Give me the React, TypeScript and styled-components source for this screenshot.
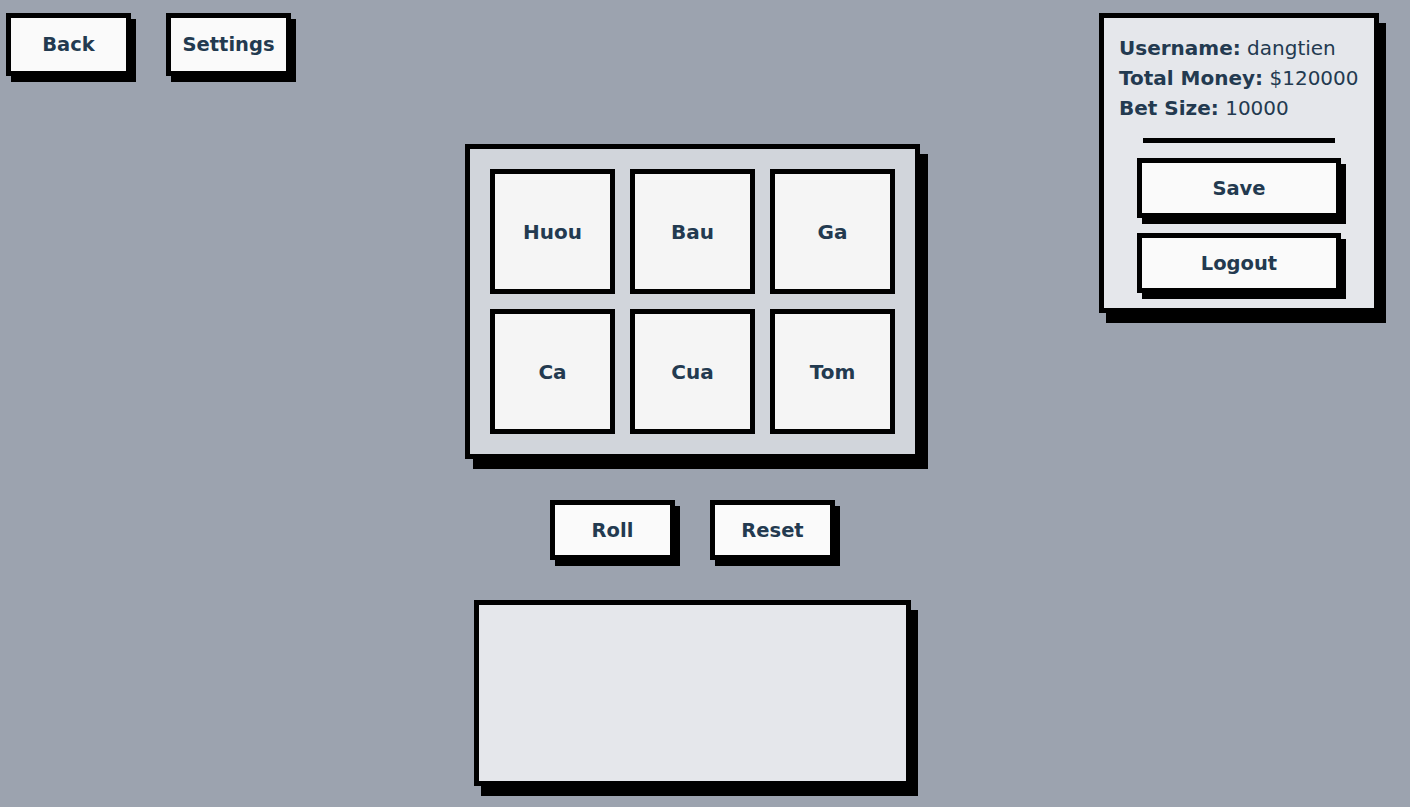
import React from "react";
import styled, { createGlobalStyle } from "styled-components";

const Global = createGlobalStyle`
  html, body { margin: 0; padding: 0; background: #9ca3af; }
  body { font-family: "DejaVu Sans", Verdana, sans-serif; color: #233a50; }
  * { box-sizing: border-box; }
`;

const Page = styled.div`
  display: grid;
  grid-template-columns: 1fr;
  width: 1410px;
  min-height: 807px;
`;

const Main = styled.div`
  grid-area: 1 / 1;
  display: flex;
  flex-direction: column;
  align-items: center;
  padding: 13px 25px 0 0;
`;

const Nav = styled.nav`
  align-self: flex-start;
  margin-left: 6px;
  display: flex;
  gap: 35px;
`;

const Btn = styled.button<{ $h?: number; $w?: number }>`
  width: ${(p) => p.$w ?? 125}px;
  height: ${(p) => p.$h ?? 60}px;
  background: #fafafa;
  border: 5px solid #000;
  box-shadow: 5px 6px 0 #000;
  font-family: "DejaVu Sans", Verdana, sans-serif;
  font-weight: bold;
  font-size: 19.5px;
  color: #233a50;
  padding: 0;
  cursor: pointer;
`;

const Board = styled.div`
  margin-top: 68px;
  display: grid;
  grid-template-columns: repeat(3, 125px);
  grid-auto-rows: 125px;
  gap: 15px;
  padding: 20px;
  background: #d1d5db;
  border: 5px solid #000;
  box-shadow: 8px 10px 0 #000;
`;

const Cell = styled.div`
  display: flex;
  align-items: center;
  justify-content: center;
  background: #f5f5f5;
  border: 5px solid #000;
  font-weight: bold;
  font-size: 20px;
  color: #233a50;
`;

const Controls = styled.div`
  margin-top: 41px;
  display: flex;
  gap: 35px;
`;

const Result = styled.div`
  margin-top: 40px;
  width: 437px;
  height: 186px;
  background: #e5e7eb;
  border: 5px solid #000;
  box-shadow: 7px 10px 0 #000;
`;

const Panel = styled.aside`
  grid-area: 1 / 1;
  justify-self: end;
  align-self: start;
  margin: 13px 31px 0 0;
  width: 280px;
  background: #e5e7eb;
  border: 5px solid #000;
  box-shadow: 7px 10px 0 #000;
  padding: 15px;
  display: flex;
  flex-direction: column;
  align-items: center;
`;

const Info = styled.div`
  align-self: stretch;
  font-size: 20px;
  line-height: 30px;
  color: #233a50;
  white-space: nowrap;
`;

const Label = styled.b`
  font-weight: bold;
`;

const Divider = styled.hr`
  width: 80%;
  height: 5px;
  margin: 15px 0;
  border: none;
  background: #000;
`;

const PanelButtons = styled.div`
  width: 85%;
  display: flex;
  flex-direction: column;
  gap: 15px;
`;

const animals = ["Huou", "Bau", "Ga", "Ca", "Cua", "Tom"];

export default function App() {
  return (
    <>
      <Global />
      <Page>
        <Main>
          <Nav>
            <Btn $h={63}>Back</Btn>
            <Btn $h={63}>Settings</Btn>
          </Nav>
          <Board>
            {animals.map((a) => (
              <Cell key={a}>{a}</Cell>
            ))}
          </Board>
          <Controls>
            <Btn>Roll</Btn>
            <Btn>Reset</Btn>
          </Controls>
          <Result />
        </Main>
        <Panel>
          <Info>
            <div>
              <Label>Username:</Label> dangtien
            </div>
            <div>
              <Label>Total Money:</Label> $120000
            </div>
            <div>
              <Label>Bet Size:</Label> 10000
            </div>
          </Info>
          <Divider />
          <PanelButtons>
            <Btn $w={204}>Save</Btn>
            <Btn $w={204}>Logout</Btn>
          </PanelButtons>
        </Panel>
      </Page>
    </>
  );
}
